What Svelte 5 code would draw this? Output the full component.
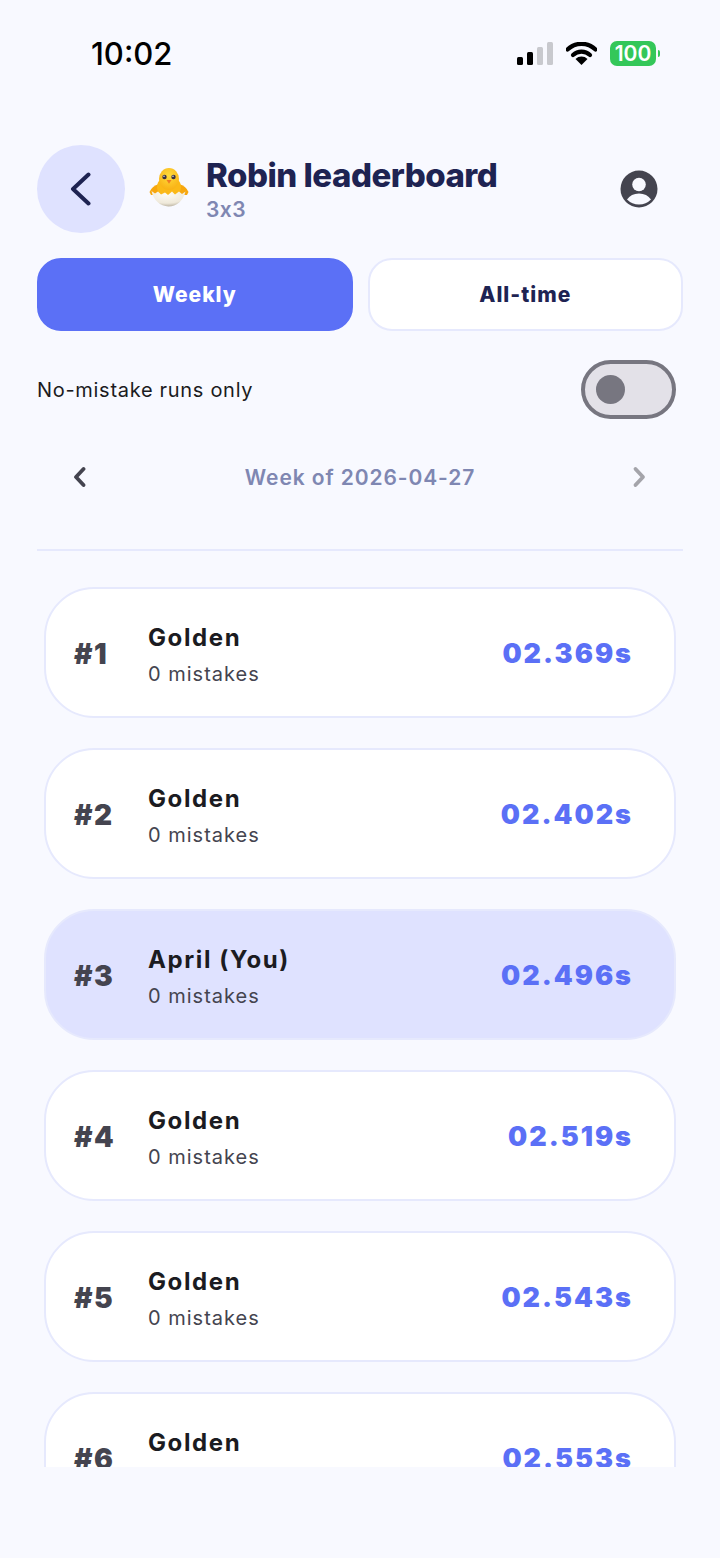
<script>
  const rows = [
    { rank: 1, name: 'Golden', time: '02.369s' },
    { rank: 2, name: 'Golden', time: '02.402s' },
    { rank: 3, name: 'April (You)', time: '02.496s', me: true },
    { rank: 4, name: 'Golden', time: '02.519s' },
    { rank: 5, name: 'Golden', time: '02.543s' },
    { rank: 6, name: 'Golden', time: '02.553s' }
  ];
</script>

<div class="screen">
  <div class="status">
    <span class="clock">10:02</span>
    <div class="status-icons">
      <svg class="signal" width="36" height="23" viewBox="0 0 36 23">
        <rect x="0" y="15" width="6" height="8" rx="1.5" fill="#000" />
        <rect x="10" y="10" width="6" height="13" rx="1.5" fill="#000" />
        <rect x="20" y="5" width="6" height="18" rx="1.5" fill="#c8c9ce" />
        <rect x="30" y="0" width="6" height="23" rx="1.5" fill="#c8c9ce" />
      </svg>
      <svg class="wifi" width="31" height="23" viewBox="0 0 31 23">
        <path d="M1.5 7.5a20 20 0 0 1 28 0" fill="none" stroke="#000" stroke-width="4.2" stroke-linecap="round" />
        <path d="M7 13a12.500 12.500 0 0 1 17 0" fill="none" stroke="#000" stroke-width="4.200" stroke-linecap="round" />
        <path d="M15.500 23l-6-6a8.500 8.500 0 0 1 12 0z" fill="#000" />
      </svg>
      <div class="battery"><span class="battery-body">100</span><span class="battery-tip"></span></div>
    </div>
  </div>

  <div class="header">
    <button class="back" aria-label="Back">
      <svg width="24" height="36" viewBox="0 0 24 36"><path d="M21.500 3.500 6 18l15.500 14.500" fill="none" stroke="#1e2352" stroke-width="4" stroke-linecap="round" stroke-linejoin="round" /></svg>
    </button>
    <svg class="chick" width="42" height="46" viewBox="0 0 42 46">
      <defs>
        <radialGradient id="head" cx="0.5" cy="0.35" r="0.7">
          <stop offset="0" stop-color="#ffdc3c" />
          <stop offset="1" stop-color="#f9ae12" />
        </radialGradient>
        <radialGradient id="shell" cx="0.45" cy="0.2" r="0.9">
          <stop offset="0" stop-color="#fdfbf3" />
          <stop offset="0.65" stop-color="#efe9da" />
          <stop offset="1" stop-color="#a89f8d" />
        </radialGradient>
      </defs>
      <path d="M11 17 Q4 19 1.500 25 L3 28 L11 28z" fill="#f7a70e" />
      <path d="M31 17 Q38 19 40.500 25 L39 28 L31 28z" fill="#f7a70e" />
      <ellipse cx="21" cy="20" rx="12" ry="11" fill="#fbb917" />
      <ellipse cx="21" cy="12" rx="10" ry="11" fill="url(#head)" />
      <circle cx="16.500" cy="10" r="2.200" fill="#3a3140" />
      <circle cx="25.500" cy="10" r="2.200" fill="#3a3140" />
      <circle cx="16" cy="9.300" r="0.700" fill="#fff" />
      <circle cx="25" cy="9.300" r="0.700" fill="#fff" />
      <path d="M18.500 13h5l-2.500 3.800z" fill="#ef7a24" />
      <path d="M3.500 24 l3.500 2.500 3-2 3 3 4-2 3 2.500 4-3.500 3 3 4-3 3 2.500 3.500-2.500 A17.500 20 0 0 1 3.500 24z" fill="url(#shell)" />
    </svg>
    <div class="titles">
      <h1>Robin leaderboard</h1>
      <span class="size">3x3</span>
    </div>
    <svg class="profile" width="38" height="38" viewBox="0 0 38 38">
      <circle cx="19" cy="19" r="18.500" fill="#44444f" />
      <circle cx="19" cy="14.500" r="6.800" fill="#f8f9ff" />
      <path d="M7 29.500 Q11 23.500 19 23.500 Q27 23.500 31 29.500 Q26 34.500 19 34.500 Q12 34.500 7 29.500z" fill="#f8f9ff" />
    </svg>
  </div>

  <div class="tabs">
    <button class="tab active">Weekly</button>
    <button class="tab">All-time</button>
  </div>

  <div class="filter">
    <span>No-mistake runs only</span>
    <div class="switch"><span class="knob"></span></div>
  </div>

  <div class="week">
    <svg width="14" height="22" viewBox="0 0 14 22"><path d="M9.500 3 2 11l7.500 8" fill="none" stroke="#44444f" stroke-width="3.800" stroke-linecap="round" stroke-linejoin="round" /></svg>
    <span>Week of 2026-04-27</span>
    <svg width="14" height="22" viewBox="0 0 14 22"><path d="M3.500 3 11 11l-7.500 8" fill="none" stroke="#a4a4aa" stroke-width="3.800" stroke-linecap="round" stroke-linejoin="round" /></svg>
  </div>

  <div class="divider"></div>

  <div class="list">
    {#each rows as row}
      <div class="card" class:me={row.me}>
        <span class="rank">#{row.rank}</span>
        <div class="who">
          <span class="name">{row.name}</span>
          <span class="mistakes">0 mistakes</span>
        </div>
        <span class="time">{row.time}</span>
      </div>
    {/each}
  </div>
</div>

<style>
  :global(body) {
    margin: 0;
    background: #f8f9ff;
  }
  .screen {
    width: 720px;
    height: 1558px;
    background: #f8f9ff;
    font-family: Inter, sans-serif;
    overflow: hidden;
  }

  /* status bar */
  .status {
    height: 145px;
    box-sizing: border-box;
    padding: 34px 60px 0 91px;
    display: flex;
    justify-content: space-between;
    align-items: flex-start;
  }
  .clock {
    font-size: 31px;
    line-height: 40px;
    font-weight: 500;
    color: #000;
  }
  .status-icons {
    display: flex;
    align-items: center;
    gap: 13px;
    padding-top: 7px;
  }
  .battery {
    display: flex;
    align-items: center;
    gap: 2px;
  }
  .battery-body {
    width: 46px;
    height: 25px;
    border-radius: 7px;
    background: #34c759;
    color: #fff;
    font-size: 21px;
    line-height: 25px;
    font-weight: 600;
    text-align: center;
  }
  .battery-tip {
    width: 2px;
    height: 7px;
    border-radius: 0 2px 2px 0;
    background: #34c759;
  }

  /* header */
  .header {
    height: 87px;
    padding: 0 62px 0 37px;
    display: flex;
    align-items: center;
  }
  .back {
    width: 88px;
    height: 88px;
    flex: none;
    border: 0;
    padding: 0 4px 0 0;
    border-radius: 50%;
    background: #dfe2ff;
    display: flex;
    align-items: center;
    justify-content: center;
    margin-right: 23px;
  }
  .chick {
    flex: none;
    margin: 3px 16px 0 0;
  }
  .titles {
    flex: 1;
    display: flex;
    flex-direction: column;
    padding-bottom: 3px;
  }
  h1 {
    margin: 0;
    font-size: 33px;
    line-height: 38px;
    font-weight: 800;
    letter-spacing: -0.5px;
    color: #1e2352;
  }
  .size {
    font-size: 21px;
    line-height: 24px;
    font-weight: 600;
    color: #7f87b2;
    letter-spacing: 0.5px;
    margin: 4px 0 -4px 0;
  }

  /* tabs */
  .tabs {
    display: flex;
    gap: 15px;
    margin: 26px 37px 0;
  }
  .tab {
    flex: 1;
    height: 73px;
    box-sizing: border-box;
    border-radius: 24px;
    border: 2px solid #e6e9fd;
    background: #fff;
    color: #1e2352;
    font-family: Inter, sans-serif;
    font-size: 21px;
    font-weight: 800;
    letter-spacing: 1px;
  }
  .tab.active {
    background: #5b70f6;
    border-color: #5b70f6;
    color: #fff;
  }

  /* filter */
  .filter {
    margin-top: 29px;
    padding: 0 44px 0 37px;
    height: 59px;
    display: flex;
    align-items: center;
    justify-content: space-between;
    font-size: 20px;
    letter-spacing: 0.7px;
    color: #1b1b21;
  }
  .switch {
    width: 95px;
    height: 59px;
    box-sizing: border-box;
    border: 4px solid #777680;
    border-radius: 30px;
    background: #e3e1e8;
    display: flex;
    align-items: center;
    padding-left: 11px;
  }
  .knob {
    width: 29px;
    height: 29px;
    border-radius: 50%;
    background: #777680;
  }

  /* week picker */
  .week {
    margin-top: 28px;
    padding: 0 74px;
    height: 60px;
    display: flex;
    align-items: center;
    justify-content: space-between;
  }
  .week span {
    font-size: 21px;
    font-weight: 600;
    letter-spacing: 0.9px;
    color: #7f87b2;
  }
  .divider {
    margin: 42px 37px 0;
    height: 2px;
    background: #e6e9fd;
  }

  /* rows */
  .list {
    margin-top: 36px;
    padding: 0 44px;
    height: 880px;
    overflow: hidden;
    display: flex;
    flex-direction: column;
    gap: 30px;
  }
  .card {
    flex: none;
    height: 131px;
    box-sizing: border-box;
    border: 2px solid #e6e9fd;
    border-radius: 50px;
    background: #fff;
    padding: 2px 41px 0 28px;
    display: flex;
    align-items: center;
  }
  .card.me {
    background: #dfe2ff;
  }
  .rank {
    width: 74px;
    font-size: 28px;
    font-weight: 900;
    letter-spacing: 1.5px;
    color: #44444f;
  }
  .who {
    flex: 1;
    display: flex;
    flex-direction: column;
    gap: 8px;
    padding-top: 3px;
  }
  .name {
    font-size: 24px;
    line-height: 30px;
    font-weight: 700;
    letter-spacing: 1.6px;
    color: #1b1b21;
  }
  .mistakes {
    font-size: 20px;
    line-height: 26px;
    letter-spacing: 1px;
    color: #44444f;
  }
  .time {
    font-size: 27px;
    font-weight: 900;
    letter-spacing: 2px;
    color: #5b70f6;
  }
</style>
